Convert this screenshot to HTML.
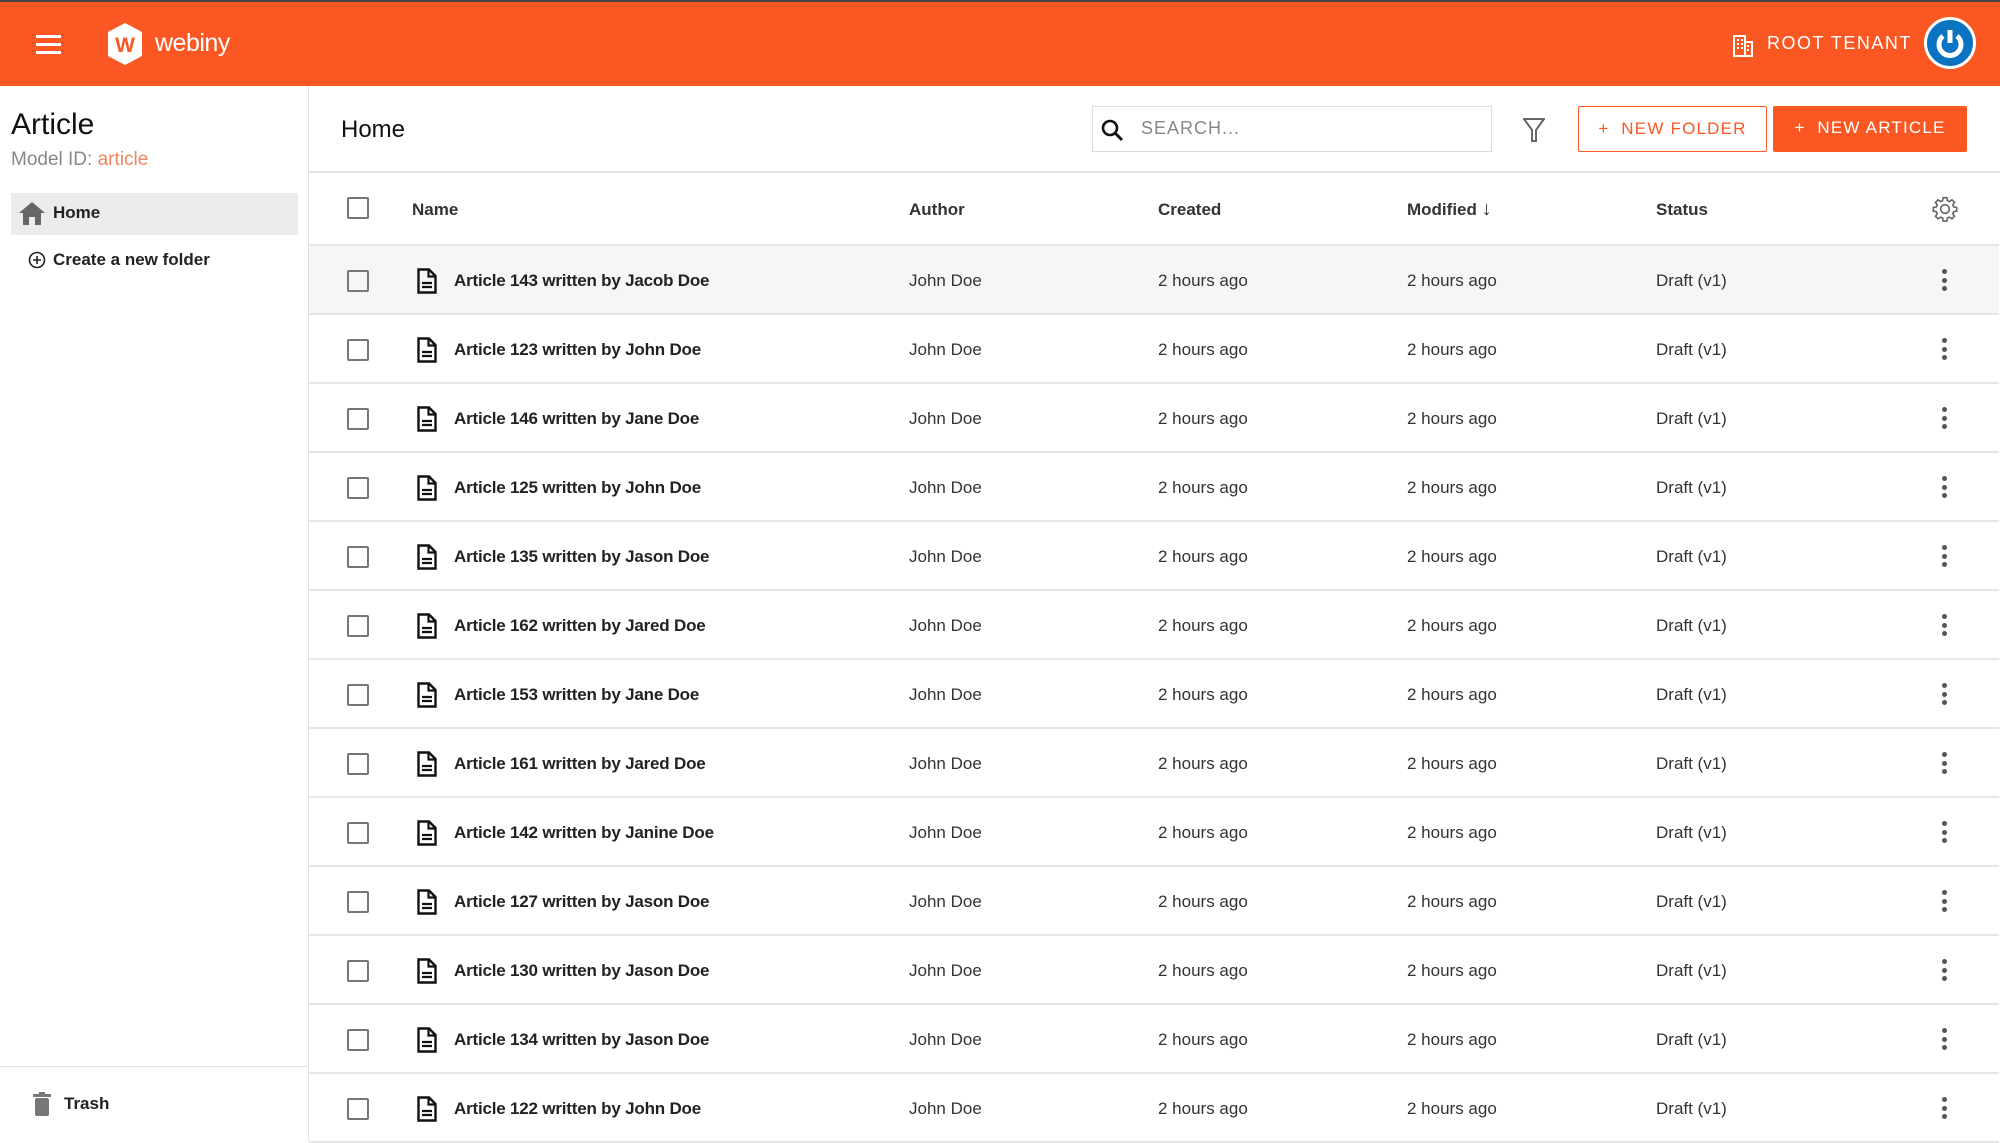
<!DOCTYPE html>
<html><head><meta charset="utf-8"><style>
*{box-sizing:border-box;margin:0;padding:0}
body{width:2000px;height:1142px;overflow:hidden;background:#fff;font-family:"Liberation Sans",sans-serif;color:#222;position:relative}
.hdr{position:absolute;left:0;top:0;width:2000px;height:86px;background:#fa5723;border-top:2px solid #444}
.side{position:absolute;left:0;top:86px;width:309px;height:1056px;border-right:1px solid #e2e2e2;background:#fff}
.main{position:absolute;left:309px;top:86px;width:1691px;height:1056px}
.abs{position:absolute}
.row{position:absolute;left:0;width:1690px;height:69px;border-bottom:2px solid #e6e6e6}
.cb{position:absolute;left:38px;top:24px;width:22px;height:22px;border:2px solid #777;border-radius:2px}
.t{position:absolute;top:0;line-height:69px;font-size:17px;color:#333}
.nm{font-weight:bold;left:145px;color:#222;font-size:17px;letter-spacing:-0.2px}
.dots{position:absolute;left:1633px;top:23px;width:5px}
.dots i{display:block;width:5px;height:5px;border-radius:50%;background:#555;margin-bottom:3.5px}
.btn{position:absolute;top:106px;height:46px;font-size:17px;letter-spacing:1.2px;line-height:44px;text-align:center}
</style></head><body>
<div class="hdr">
 <div class="abs" style="left:36px;top:33px;width:25px;height:3px;background:#fff;box-shadow:0 8px 0 #fff,0 16px 0 #fff"></div>
 <svg class="abs" style="left:106px;top:20px" width="38" height="44" viewBox="0 0 38 44"><path d="M19 1 L36 10 V34 L19 43 L2 34 V10Z" fill="#fff"/><text x="19" y="30" text-anchor="middle" font-family="Liberation Sans" font-weight="bold" font-size="21" fill="#fa5723">W</text></svg>
 <div class="abs" style="left:155px;top:27px;color:#fff;font-size:25px;letter-spacing:-0.5px">webiny</div>
 <svg class="abs" style="left:1733px;top:33px" width="20" height="22" viewBox="0 0 20 22"><rect x="1" y="1" width="11" height="20" fill="none" stroke="#fff" stroke-width="2"/><rect x="12" y="7" width="7" height="14" fill="none" stroke="#fff" stroke-width="2"/><path d="M4 5h2M8 5h2M4 9h2M8 9h2M4 13h2M8 13h2M14 11h2M14 15h2" stroke="#fff" stroke-width="2"/></svg>
 <div class="abs" style="left:1767px;top:31px;color:#fff;font-size:18px;letter-spacing:1.5px">ROOT TENANT</div>
 <div class="abs" style="left:1924px;top:15px;width:52px;height:52px;border-radius:50%;background:#0a74c2;border:3px solid #fff"></div>
 <svg class="abs" style="left:1932px;top:23px" width="36" height="36" viewBox="0 0 36 36"><path d="M11 11 A11 11 0 1 0 25 11" fill="none" stroke="#fff" stroke-width="5"/><path d="M18 5 V18" stroke="#fff" stroke-width="5"/></svg>
</div>
<div class="side">
 <div class="abs" style="left:11px;top:22px;font-size:30px;color:#111">Article</div>
 <div class="abs" style="left:11px;top:63px;font-size:19px;color:#888">Model ID: <span style="color:#f0845e">article</span></div>
 <div class="abs" style="left:11px;top:107px;width:287px;height:42px;background:#ececec"></div>
 <svg class="abs" style="left:19px;top:116px" width="26" height="23" viewBox="0 0 26 23"><path d="M13 0 L26 11 H22 V23 H16 V15 H10 V23 H4 V11 H0Z" fill="#666"/></svg>
 <div class="abs" style="left:53px;top:117px;font-size:17px;font-weight:bold">Home</div>
 <svg class="abs" style="left:28px;top:165px" width="18" height="18" viewBox="0 0 18 18"><circle cx="9" cy="9" r="7.5" fill="none" stroke="#222" stroke-width="1.6"/><path d="M9 5v8M5 9h8" stroke="#222" stroke-width="1.6"/></svg>
 <div class="abs" style="left:53px;top:164px;font-size:17px;font-weight:bold">Create a new folder</div>
 <div class="abs" style="left:0;top:980px;width:309px;height:1px;background:#e2e2e2"></div>
 <svg class="abs" style="left:33px;top:1006px" width="18" height="24" viewBox="0 0 18 24"><rect x="6" y="0" width="6" height="3" fill="#777"/><rect x="0" y="2" width="18" height="3" fill="#777"/><rect x="2" y="6" width="14" height="18" rx="2" fill="#777"/></svg>
 <div class="abs" style="left:64px;top:1008px;font-size:17px;font-weight:bold">Trash</div>
</div>
<div class="main">
 <div class="abs" style="left:32px;top:30px;font-size:24px;color:#111">Home</div>
 <div class="abs" style="left:783px;top:20px;width:400px;height:46px;border:1.5px solid #ddd"></div>
 <svg class="abs" style="left:791px;top:32px" width="26" height="26" viewBox="0 0 26 26"><circle cx="10" cy="10" r="7" fill="none" stroke="#111" stroke-width="2.6"/><path d="M15 15 L22 22" stroke="#111" stroke-width="3"/></svg>
 <div class="abs" style="left:832px;top:32px;font-size:18px;color:#888;letter-spacing:1px">SEARCH...</div>
 <svg class="abs" style="left:1214px;top:32px" width="22" height="24" viewBox="0 0 22 24"><path d="M1 1 H21 L13 12 V23 H9 V12Z" fill="none" stroke="#666" stroke-width="2"/></svg>
 <div class="btn" style="left:1269px;top:20px;width:189px;border:1.5px solid #fa5723;color:#fa5723;border-radius:2px">+&nbsp; NEW FOLDER</div>
 <div class="btn" style="left:1464px;top:20px;width:194px;background:#fa5723;color:#fff;border-radius:2px">+&nbsp; NEW ARTICLE</div>
 <div class="abs" style="left:0;top:85px;width:1691px;height:2px;background:#e6e6e6"></div>
 <div class="row" style="top:87px;height:73px">
  <div class="cb" style="top:24px"></div>
  <div class="t" style="left:103px;line-height:73px;font-weight:bold">Name</div>
  <div class="t" style="left:600px;line-height:73px;font-weight:bold">Author</div>
  <div class="t" style="left:849px;line-height:73px;font-weight:bold">Created</div>
  <div class="t" style="left:1098px;line-height:73px;font-weight:bold">Modified <span style="font-size:20px">↓</span></div>
  <div class="t" style="left:1347px;line-height:73px;font-weight:bold">Status</div>
  <svg class="abs" style="left:1623px;top:23px" width="26" height="26" viewBox="0 0 24 24"><path d="M12 8a4 4 0 1 0 0 8 4 4 0 0 0 0-8z M10.3 1.5h3.4l.5 2.8 1.9.8 2.3-1.6 2.4 2.4-1.6 2.3.8 1.9 2.8.5v3.4l-2.8.5-.8 1.9 1.6 2.3-2.4 2.4-2.3-1.6-1.9.8-.5 2.8h-3.4l-.5-2.8-1.9-.8-2.3 1.6-2.4-2.4 1.6-2.3-.8-1.9-2.8-.5v-3.4l2.8-.5.8-1.9-1.6-2.3 2.4-2.4 2.3 1.6 1.9-.8z" fill="none" stroke="#666" stroke-width="1.5"/></svg>
 </div>
 <div id="rows"></div>
</div>
<script>
var names=["Article 143 written by Jacob Doe","Article 123 written by John Doe","Article 146 written by Jane Doe","Article 125 written by John Doe","Article 135 written by Jason Doe","Article 162 written by Jared Doe","Article 153 written by Jane Doe","Article 161 written by Jared Doe","Article 142 written by Janine Doe","Article 127 written by Jason Doe","Article 130 written by Jason Doe","Article 134 written by Jason Doe","Article 122 written by John Doe"];
var h="";
names.forEach(function(n,i){
 var top=160+i*69;
 h+='<div class="row" style="top:'+top+'px;'+(i==0?'background:#f6f6f6':'')+'"><div class="cb"></div>'+
 '<svg class="abs" style="left:108px;top:22px" width="20" height="26" viewBox="0 0 20 26"><path d="M1.5 1.5H12L18.5 8V24.5H1.5Z" fill="none" stroke="#111" stroke-width="2.4"/><path d="M11.5 1.5V8.5H18.5" fill="none" stroke="#111" stroke-width="2.2"/><path d="M5 15h10M5 19h10" stroke="#111" stroke-width="2.2"/></svg>'+
 '<div class="t nm">'+n+'</div><div class="t" style="left:600px">John Doe</div><div class="t" style="left:849px">2 hours ago</div><div class="t" style="left:1098px">2 hours ago</div><div class="t" style="left:1347px">Draft (v1)</div><div class="dots"><i></i><i></i><i></i></div></div>';
});
document.getElementById("rows").innerHTML=h;
</script>
</body></html>
